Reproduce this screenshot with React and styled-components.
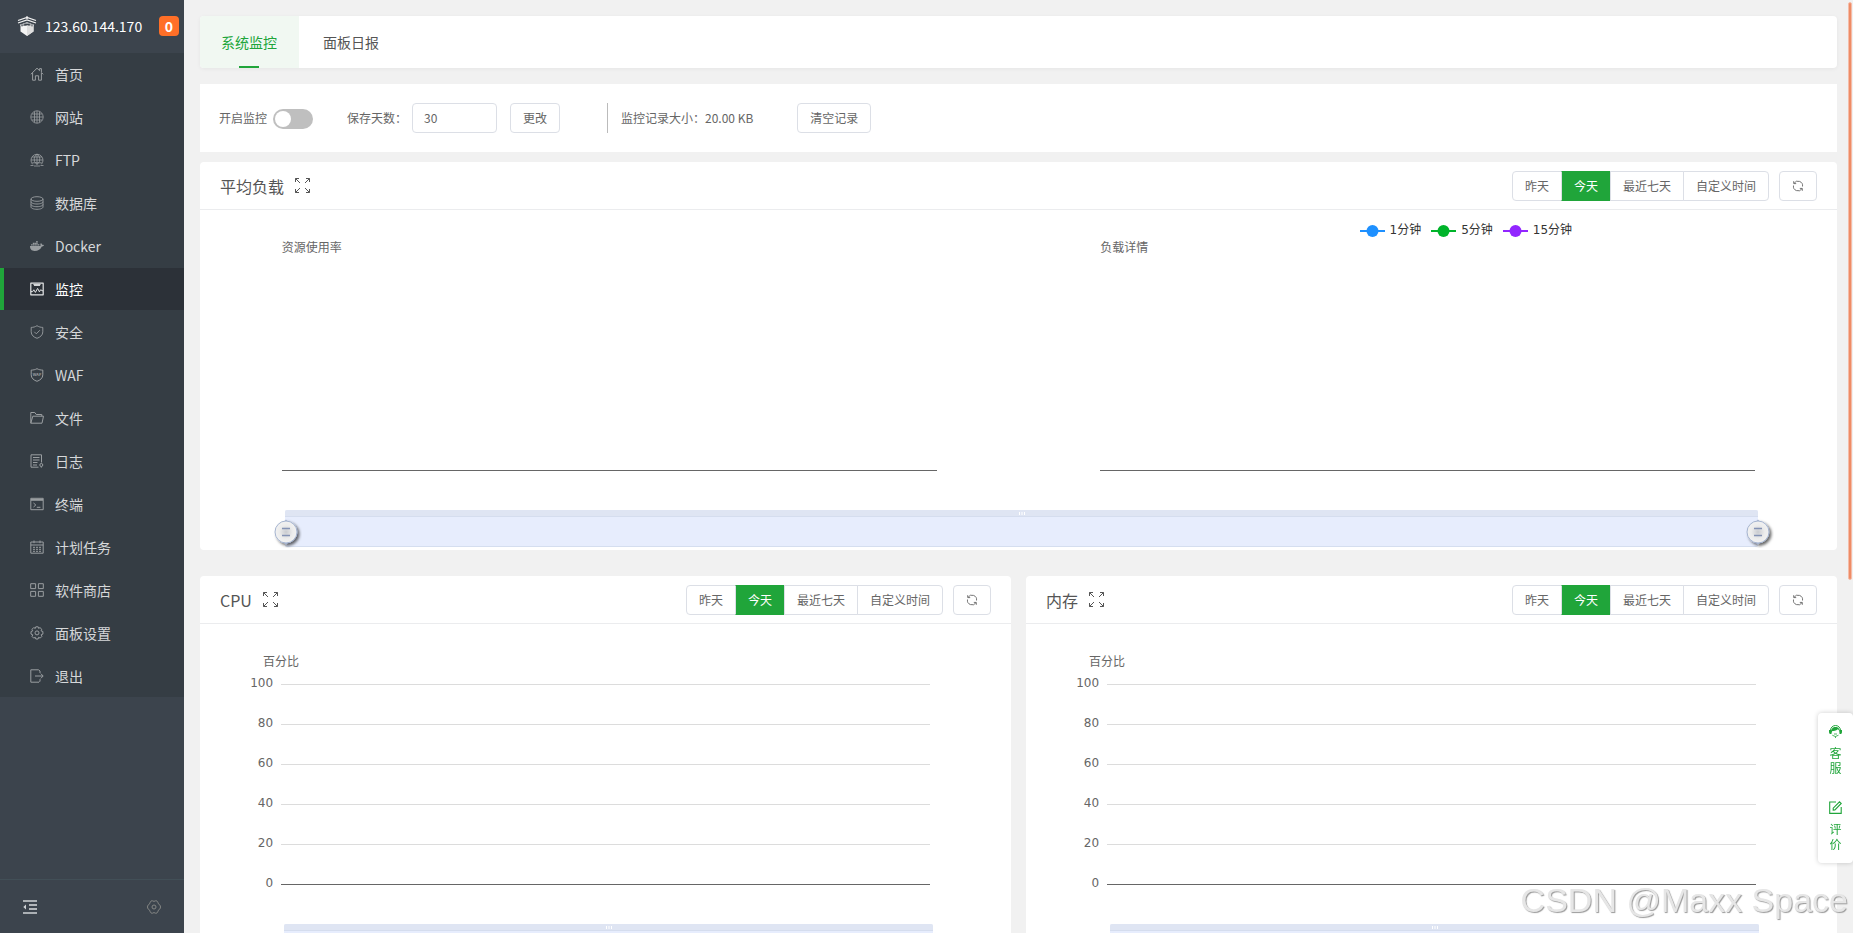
import React, { useState } from 'react'
import styled, { createGlobalStyle, css } from 'styled-components'
import { FaDocker } from 'react-icons/fa'

const colors = {
    green: '#20a53a',
    text: '#666',
    border: '#dcdfe6',
    page: '#f1f1f1',
    sidebar: '#3c444d',
    menu: '#353d44',
    menuActive: '#2c3138'
}

const uiFont = '"Noto Sans CJK SC", "Noto Sans", sans-serif'
const chartFont = '"DejaVu Sans", "Noto Sans CJK SC", sans-serif'

const GlobalStyle = createGlobalStyle`
    * {
        box-sizing: border-box;
    }

    body {
        margin: 0;
        background: ${colors.page};
        color: ${colors.text};
        font-family: ${uiFont};
        font-size: 12px;
    }

    button, input {
        font-family: inherit;
        font-size: inherit;
        color: inherit;
    }
`

const Layout = styled.div`
    display: flex;
    height: 100vh;
    overflow: hidden;
`

/* sidebar */

const Sidebar = styled.aside`
    display: flex;
    flex-direction: column;
    flex: none;
    width: 184px;
    background: ${colors.sidebar};
`

const SidebarHeader = styled.header`
    display: flex;
    align-items: center;
    height: 53px;
    padding: 0 5px 1px 17px;
    color: #fff;
    font-size: 14px;
    line-height: 20px;
`

const ServerAddress = styled.span`
    flex: 1;
    margin-left: 8px;
`

const MessageCount = styled.span`
    width: 20px;
    height: 20px;
    border-radius: 4px;
    background: #ff6f27;
    font-weight: 700;
    text-align: center;
`

const Menu = styled.nav`
    display: flex;
    flex-direction: column;
    gap: 1px;
    background: ${colors.menu};
`

const MenuLink = styled.a`
    display: flex;
    align-items: center;
    gap: 11px;
    height: 42px;
    padding: 0 0 0 26px;
    border-left: 4px solid ${({ $active }) => ($active ? colors.green : 'transparent')};
    background: ${({ $active }) => ($active ? colors.menuActive : 'transparent')};
    color: ${({ $active }) => ($active ? '#fff' : '#d6d8da')};
    font-size: 14px;
    line-height: 20px;
    text-decoration: none;

    svg {
        flex: none;
        color: ${({ $active }) => ($active ? '#e4e5e6' : '#9a9ea1')};
    }
`

const SidebarFooter = styled.footer`
    display: flex;
    align-items: center;
    justify-content: space-between;
    height: 54px;
    margin-top: auto;
    padding: 0 23px;
    border-top: 1px solid #424f57;
`

const IconButton = styled.button`
    display: flex;
    padding: 0;
    border: 0;
    background: none;
    color: ${({ $dim }) => ($dim ? '#858785' : '#d0d3d6')};
`

/* content */

const Content = styled.main`
    flex: 1;
    min-width: 0;
    padding: 16px 16px 0;
`

const TabBar = styled.div`
    display: flex;
    gap: 3px;
    height: 52px;
    border-radius: 4px;
    overflow: hidden;
    background: #fff;
    box-shadow: 0 1px 4px rgba(0, 0, 0, 0.05);
`

const Tab = styled.button`
    display: flex;
    flex-direction: column;
    align-items: center;
    padding: 16px 22px 0 21px;
    border: 0;
    background: ${({ $active }) => ($active ? '#f1f8f2' : '#fff')};
    color: ${({ $active }) => ($active ? colors.green : '#555')};
    font-size: 14px;
    line-height: 20px;

    &::after {
        content: '';
        width: 20px;
        height: 2px;
        margin-top: auto;
        background: ${({ $active }) => ($active ? colors.green : 'transparent')};
    }
`

const SettingsBar = styled.section`
    display: flex;
    align-items: center;
    height: 68px;
    margin: 16px 0 10px;
    padding: 0 19px;
    background: #fff;
    line-height: 18px;
`

const SwitchLabel = styled.label`
    display: flex;
    align-items: center;
    gap: 6px;
    margin-right: 34px;
`

const Switch = styled.input`
    appearance: none;
    width: 40px;
    height: 20px;
    margin: 2px 0 0;
    padding: 2px;
    border-radius: 10px;
    background: ${({ checked }) => (checked ? colors.green : '#bfbfbf')};

    &::before {
        content: '';
        display: block;
        width: 16px;
        height: 16px;
        margin-left: ${({ checked }) => (checked ? '20px' : '0')};
        border-radius: 50%;
        background: #fff;
    }
`

const DaysLabel = styled.label`
    display: flex;
    align-items: center;
    gap: 5px;
    margin-right: 13px;
`

const DaysInput = styled.input`
    width: 85px;
    height: 30px;
    padding: 0 10px 1px 11px;
    border: 1px solid ${colors.border};
    border-radius: 4px;
    background: #fff;
`

const Button = styled.button`
    display: flex;
    align-items: center;
    justify-content: center;
    height: 30px;
    padding: 0 12px;
    border: 1px solid ${colors.border};
    border-radius: 4px;
    background: #fff;
    line-height: 18px;
`

const RecordSize = styled.div`
    display: flex;
    align-items: center;
    height: 30px;
    margin-left: 47px;
    margin-right: 44px;
    padding-left: 13px;
    border-left: 1px solid #bbb;
`

const Card = styled.section`
    border-radius: 4px;
    background: #fff;
`

const CardHeader = styled.header`
    display: flex;
    align-items: center;
    justify-content: space-between;
    height: 48px;
    padding: 0 20px;
    border-bottom: 1px solid #ebecee;
`

const CardTitle = styled.h2`
    display: flex;
    align-items: center;
    gap: 11px;
    margin: 0;
    color: #555;
    font-size: 16px;
    font-weight: 400;
    line-height: 24px;
`

const Toolbar = styled.div`
    display: flex;
    gap: 10px;
`

const ButtonGroup = styled.div`
    display: flex;
`

const RangeButton = styled(Button)`
    border-radius: 0;

    &:first-child {
        border-radius: 4px 0 0 4px;
    }

    &:last-child {
        border-radius: 0 4px 4px 0;
    }

    & + & {
        margin-left: -1px;
    }

    ${({ $active }) => $active && css`
        border-color: ${colors.green};
        border-left-color: ${colors.border};
        background: ${colors.green};
        background-clip: padding-box;
        color: #fff;
    `}
`

const CardGrid = styled.div`
    display: grid;
    grid-template-columns: 1fr 1fr;
    gap: 15px;
    margin-top: 26px;
`

/* charts */

const ChartBody = styled.div`
    padding: ${({ $top }) => $top}px 0 3px;
    font-family: ${chartFont};
    line-height: 16px;
`

const Legend = styled.ul`
    display: flex;
    justify-content: flex-end;
    gap: 10px;
    height: 18px;
    margin: 0 3px 1px 0;
    padding: 0 16% 0 0;
    list-style: none;
    color: #333;
`

const LegendItem = styled.li`
    display: flex;
    align-items: center;
    gap: 5px;
`

const PlotPair = styled.div`
    display: grid;
    grid-template-columns: 1fr 1fr;
`

const Plot = styled.div`
    padding: 0 10%;
`

const PlotArea = styled.div`
    height: 215px;
    border-bottom: 1px solid #666;
`

const AxisName = styled.div`
    margin-left: calc(10% - 18px);
    margin-bottom: 6px;
`

const AxisRows = styled.div`
    display: flex;
    flex-direction: column;
    gap: 23px;
`

const AxisRow = styled.div`
    display: flex;
    align-items: center;
    gap: 8px;
    height: 17px;
    padding-right: 10%;

    &::after {
        content: '';
        flex: 1;
        height: 1px;
        background: ${({ $base }) => ($base ? '#666' : '#dcdcdc')};
    }
`

const AxisLabel = styled.span`
    width: calc(100% / 9 - 8px);
    padding-bottom: 4px;
    text-align: right;
`

const ZoomRow = styled.div`
    margin-top: ${({ $top }) => $top}px;
    padding: 0 calc(${({ $inset }) => $inset} - 3px) 0 calc(${({ $inset }) => $inset} + 3px);
`

const ZoomTrack = styled.div`
    position: relative;
    height: 37px;
    border-bottom: 1px solid #d5deef;
    border-radius: 2px;
    background: #e7edfd;
`

const ZoomGrip = styled.div`
    display: flex;
    justify-content: center;
    align-items: center;
    height: 7px;
    border-bottom: 1px solid #d5ddee;
    border-radius: 2px 2px 0 0;
    background: #dfe5f3;
`

const ZoomHandle = styled.svg`
    position: absolute;
    top: 6px;
    ${({ $side }) => $side}: ${({ $side }) => ($side === 'left' ? '-15px' : '-16px')};
`

/* floating parts */

const HelpPanel = styled.aside`
    position: fixed;
    right: 0;
    bottom: 70px;
    display: flex;
    flex-direction: column;
    gap: 26px;
    width: 35px;
    padding: 12px 11px;
    border-radius: 4px;
    background: #fff;
    box-shadow: 0 0 5px rgba(0, 0, 0, 0.2);
`

const HelpLink = styled.a`
    display: flex;
    flex-direction: column;
    align-items: center;
    gap: 7px;
    width: 13px;
    color: ${colors.green};
    line-height: 15px;
    text-align: center;
    text-decoration: none;
`

const ScrollThumb = styled.div`
    position: fixed;
    top: 2px;
    right: 1px;
    width: 4px;
    height: 62vh;
    border: 1px solid #f5bca8;
    border-radius: 2px;
    background: #ee8c66;
`

const Watermark = styled.div`
    position: fixed;
    right: 5px;
    bottom: 13px;
    color: #e6e6e6;
    font-family: "Liberation Sans", sans-serif;
    font-size: 34px;
    line-height: 40px;
    text-shadow: 1px 1px 1px #999;
    pointer-events: none;
`

/* 14px line icons */
const Icon = ({ stroke = 1, children }) => (
    <svg
        width="14"
        height="14"
        viewBox="0 0 14 14"
        fill="none"
        stroke="currentColor"
        strokeWidth={stroke}
        strokeLinejoin="round"
        aria-hidden="true">
        {children}
    </svg>
)

const menuIcons = {
    home: (
        <Icon>
            <path d="M.8 7.3 7 1.2l2.6 2.5V1.6h1.8v3.9l1.8 1.8M2.6 6v7.2h2.8V8.8h3.2v4.4h2.8V6" />
        </Icon>
    ),
    globe: (
        <Icon stroke={0.8}>
            <circle cx="7" cy="7" r="6.2" />
            <path d="M4.5 1.5v11M9.5 1.5v11M7 .8v12.4M.8 7h12.4M1.8 4h10.4M1.8 10h10.4" />
        </Icon>
    ),
    ftp: (
        <Icon stroke={0.8}>
            <path d="M2.6 11.3a6 6 0 1 1 8.8 0M.5 12.5h3M10.500 12.500h3M4 13h6" />
            <path d="M7 1v10.500Q3.500 9 4.200 5 5 2.500 7 1q2 1.500 2.800 4 .7 4-2.800 6.500M1 7h12M2 4h10M2.200 9.800h9.600" />
        </Icon>
    ),
    database: (
        <Icon stroke={0.9}>
            <ellipse cx="7" cy="3" rx="6" ry="2.3" />
            <path d="M1 3v8c0 1.3 2.7 2.3 6 2.3s6-1 6-2.3V3M1 5.7C1 7 3.7 8 7 8s6-1 6-2.3M1 8.4c0 1.3 2.7 2.3 6 2.3s6-1 6-2.3" />
        </Icon>
    ),
    docker: <FaDocker size={14} />,
    monitor: (
        <Icon>
            <path d="M.8 1.2h12.4v11.6H.8z" strokeWidth="1.2" />
            <path d="M1 9.6h1.6l1.2-1.8 1.6 2.6 2.2-4 1.8 3.4 1.2-2L13 9" />
            <path d="M3.4 2.6h7.2M4 3.4h6" />
        </Icon>
    ),
    shield: (
        <Icon stroke={0.9}>
            <path d="M7 .7c1.8 1.2 3.8 1.7 5.8 1.7v4.4c0 3.4-2.6 5.4-5.8 6.5-3.2-1.1-5.8-3.1-5.8-6.5V2.4C3.2 2.4 5.2 1.9 7 .7z" />
            <path d="m4.3 6.8 2 2 3.6-3.6" />
        </Icon>
    ),
    waf: (
        <Icon>
            <path d="M7 .7c1.8 1 3.8 1.4 5.8 1.4v4.7c0 3.4-2.6 5.4-5.8 6.5-3.2-1.1-5.8-3.1-5.8-6.5V2.1C3.2 2.1 5.2 1.7 7 .7z" />
            <text x="7" y="8" fontSize="4" fontWeight="700" textAnchor="middle" fill="currentColor" stroke="none">WAF</text>
        </Icon>
    ),
    folder: (
        <Icon>
            <path d="M.8 12.2V1.5h4l1.4 2h5.6v1.7M.8 12.2l2-7h10.7l-1.5 7z" />
        </Icon>
    ),
    log: (
        <Icon>
            <path d="M8.5 13.2H1V.8h10.5v7.7M3 3.5h6.500M3 6h6.500M3 8.500h4.500M3 11h4" />
            <circle cx="11.3" cy="11" r="1.5" />
            <path d="M11.3 12.5v1.2" />
        </Icon>
    ),
    terminal: (
        <Icon>
            <path d="M.8 1.3h12.4v11.4H.8z" />
            <path d="M1 2.8h12" strokeWidth="2" />
            <path d="m3.5 6 2.3 2-2.3 2M6.8 10.3h3.6" />
        </Icon>
    ),
    calendar: (
        <Icon>
            <path d="M.8 2h12.4v11.2H.8zM.8 5h12.4M4 .5v2.7M10 .5v2.7" />
            <path d="M3 7.3h8M3 9.3h8M3 11.3h8" strokeDasharray="2 1" />
        </Icon>
    ),
    store: (
        <Icon>
            <path d="M.7.7h4.900v4.900H.7zM8.400.7h4.900v4.900H8.400zM.7 8.400h4.900v4.900H.7zM8.400 8.400h4.900v4.900H8.400z" />
        </Icon>
    ),
    settings: (
        <Icon>
            <path d="M5.8.8h2.4l.4 1.6 1.4-.8 1.8 1.7-.8 1.5 1.9.7v2.6l-1.8.7.8 1.600-1.700 1.700-1.600-.8-.5 1.700H5.800l-.5-1.700-1.600.8L2 10.400l.8-1.600L1 8.100V5.500l1.800-.7L2 3.300l1.700-1.700 1.600.8z" />
            <circle cx="7" cy="6.9" r="2" />
        </Icon>
    ),
    exit: (
        <Icon>
            <path d="M10 4V2L8.5.8H.8v12.4H9l1-1v-2M5 7h8M10.8 4.600 13.200 7l-2.400 2.400" />
        </Icon>
    )
}

const Logo = () => (
    <svg width="20" height="20" viewBox="0 0 20 20" aria-hidden="true">
        <path d="M3.500 9.500h13v6L10 20l-6.500-4.500z" fill="#f4f4f4" />
        <path d="M10 9.500h6.500v6L10 20z" fill="#dedede" />
        <path d="M1 4.500 10 1.500l9 3M1 7l9-3 9 3M3 9.200 10 6.800l7 2.400M10 0v3" fill="none" stroke="#f2f2f2" strokeWidth="1.200" />
        <path d="M5 7.500v3M8 7v3M12 7v3M15 7.500v3" stroke="#3c444d" strokeWidth=".8" />
    </svg>
)

const ExpandIcon = () => (
    <svg width="15" height="15" viewBox="0 0 15 15" fill="none" stroke="currentColor" aria-hidden="true">
        <path d="M.5 4V.5H4M.5.5 5 5M11 .5h3.5V4M14.5.5 10 5M.5 11v3.5H4M.5 14.5 5 10M14.5 11v3.5H11M14.5 14.5 10 10" />
    </svg>
)

const RefreshIcon = () => (
    <svg width="12" height="12" viewBox="0 0 12 12" fill="none" stroke="currentColor" strokeWidth=".9" aria-hidden="true">
        <path d="M2 3.400a4.600 4.600 0 0 1 8.500 3.100M10 8.600a4.600 4.600 0 0 1-8.500-3.100" />
        <path d="M1.700 1.200v2.400h2.500M10.300 10.800V8.400H7.800" />
    </svg>
)

const CollapseIcon = () => (
    <Icon>
        <path d="M0 1h14M0 13h14" strokeWidth="1.3" />
        <path d="M6 5h8M6 9h8" strokeWidth="1.8" opacity=".8" />
        <path d="M3 4.5v5L.3 7z" fill="currentColor" stroke="none" />
    </Icon>
)

const CogIcon = () => (
    <Icon>
        <path d="M4.300.8h1.200Q7 2 8.500.8h1.200l1.400 2q0 1.300 1.100 1.500l1.200 1.700v2l-1.200 1.700q-1.100.2-1.100 1.500l-1.400 2H8.500Q7 12 5.500 13.200H4.300l-1.400-2q0-1.300-1.100-1.500L.6 8V6l1.200-1.700q1.100-.2 1.100-1.500z" />
        <circle cx="7" cy="7" r="2" />
    </Icon>
)

const ServiceIcon = () => (
    <svg width="13" height="13" viewBox="0 0 13 13" aria-hidden="true">
        <path d="M1.5 5.5a5 5 0 0 1 10 0" fill="none" stroke="currentColor" />
        <path d="M2 8.3C1.6 3.5 4 1.9 6.5 1.9S11.4 3.500 11 8.300C10.600 5.800 9.700 4.800 8.800 4.300 7 6 4.600 6 3.400 6z" fill="currentColor" />
        <path d="M0 5h2.5v4H1Q0 8.5 0 7zM13 5h-2.5v4H12q1-.5 1-2z" fill="currentColor" />
        <path d="M3.3 10.200q3 2.700 6.200 0M6.500 11.500v1.500M5 9h3" fill="none" stroke="currentColor" strokeWidth=".8" />
    </svg>
)

const EditIcon = () => (
    <svg width="13" height="13" viewBox="0 0 13 13" fill="none" stroke="currentColor" strokeWidth="1.1" aria-hidden="true">
        <path d="M7 1H.7v11.4h11.500V6" />
        <path d="M4.2 9.2V7.2L10.5.8l1.7 1.6-6.3 6.5z" />
    </svg>
)

const ranges = ['昨天', '今天', '最近七天', '自定义时间']

const menu = [
    ['home', '首页'],
    ['globe', '网站'],
    ['ftp', 'FTP'],
    ['database', '数据库'],
    ['docker', 'Docker'],
    ['monitor', '监控'],
    ['shield', '安全'],
    ['waf', 'WAF'],
    ['folder', '文件'],
    ['log', '日志'],
    ['terminal', '终端'],
    ['calendar', '计划任务'],
    ['store', '软件商店'],
    ['settings', '面板设置'],
    ['exit', '退出']
]

const series = [
    { name: '1分钟', color: '#1e90ff' },
    { name: '5分钟', color: '#00b42a' },
    { name: '15分钟', color: '#9226ff' }
]

const ChartCard = ({ title, children }) => {
    const [range, setRange] = useState('今天')

    return (
        <Card>
            <CardHeader>
                <CardTitle>
                    {title}
                    <ExpandIcon />
                </CardTitle>
                <Toolbar>
                    <ButtonGroup>
                        {ranges.map((name) => (
                            <RangeButton
                                key={name}
                                type="button"
                                $active={name === range}
                                onClick={() => setRange(name)}>
                                {name}
                            </RangeButton>
                        ))}
                    </ButtonGroup>
                    <Button type="button" aria-label="刷新"><RefreshIcon /></Button>
                </Toolbar>
            </CardHeader>
            {children}
        </Card>
    )
}

const Handle = ({ side }) => (
    <ZoomHandle $side={side} width="32" height="32" viewBox="0 0 32 32" aria-hidden="true">
        <defs>
            <filter id={`shadow-${side}`} x="-30%" y="-30%" width="160%" height="160%">
                <feDropShadow dx="2" dy="2" stdDeviation="1.5" floodColor="#000" floodOpacity=".6" />
            </filter>
            <radialGradient id={`face-${side}`}>
                <stop offset="0" stopColor="#c9cbd0" />
                <stop offset=".6" stopColor="#ececec" />
                <stop offset="1" stopColor="#f2f2f2" />
            </radialGradient>
        </defs>
        <g filter={`url(#shadow-${side})`}>
            <circle cx="16" cy="16" r="11" fill={`url(#face-${side})`} stroke="#a5b4d0" />
            <path d="m14.500 5 1.500-1.500L17.500 5zM14.500 27l1.500 1.500 1.500-1.500z" fill="#a5b4d0" />
        </g>
        <path d="M12 12.5h8M12 19.5h8" stroke="#8593b5" strokeWidth="1.3" />
    </ZoomHandle>
)

const DataZoom = ({ top, inset }) => (
    <ZoomRow $top={top} $inset={inset}>
        <ZoomTrack>
            <ZoomGrip>
                <svg width="6" height="3" viewBox="0 0 6 3" stroke="#fff" aria-hidden="true">
                    <path d="M.5 0v3M3 0v3M5.5 0v3" />
                </svg>
            </ZoomGrip>
            <Handle side="left" />
            <Handle side="right" />
        </ZoomTrack>
    </ZoomRow>
)

const LoadChart = () => (
    <ChartBody $top={11}>
        <Legend>
            {series.map(({ name, color }) => (
                <LegendItem key={name}>
                    <svg width="25" height="14" viewBox="0 0 25 14" aria-hidden="true">
                        <path d="M0 8h25" stroke={color} strokeWidth="2" />
                        <circle cx="12.5" cy="8" r="6" fill={color} />
                    </svg>
                    {name}
                </LegendItem>
            ))}
        </Legend>
        <PlotPair>
            <Plot>
                资源使用率
                <PlotArea />
            </Plot>
            <Plot>
                负载详情
                <PlotArea />
            </Plot>
        </PlotPair>
        <DataZoom top={39} inset="5%" />
    </ChartBody>
)

const PercentChart = () => (
    <ChartBody $top={30}>
        <AxisName>百分比</AxisName>
        <AxisRows>
            {[100, 80, 60, 40, 20, 0].map((value) => (
                <AxisRow key={value} $base={value === 0}>
                    <AxisLabel>{value}</AxisLabel>
                </AxisRow>
            ))}
        </AxisRows>
        <DataZoom top={31} inset="10%" />
    </ChartBody>
)

const App = () => {
    const [enabled, setEnabled] = useState(false)
    const [days, setDays] = useState('30')
    const [tab, setTab] = useState('系统监控')

    return (
        <>
            <GlobalStyle />
            <Layout>
                <Sidebar>
                    <SidebarHeader>
                        <Logo />
                        <ServerAddress>123.60.144.170</ServerAddress>
                        <MessageCount>0</MessageCount>
                    </SidebarHeader>
                    <Menu>
                        {menu.map(([icon, name]) => (
                            <MenuLink key={icon} href={`#${icon}`} $active={icon === 'monitor'}>
                                {menuIcons[icon]}
                                {name}
                            </MenuLink>
                        ))}
                    </Menu>
                    <SidebarFooter>
                        <IconButton type="button" aria-label="收起菜单"><CollapseIcon /></IconButton>
                        <IconButton type="button" aria-label="菜单设置" $dim><CogIcon /></IconButton>
                    </SidebarFooter>
                </Sidebar>

                <Content>
                    <TabBar>
                        {['系统监控', '面板日报'].map((name) => (
                            <Tab key={name} type="button" $active={name === tab} onClick={() => setTab(name)}>
                                {name}
                            </Tab>
                        ))}
                    </TabBar>

                    <SettingsBar>
                        <SwitchLabel htmlFor="monitor-enabled">
                            开启监控
                            <Switch
                                id="monitor-enabled"
                                type="checkbox"
                                checked={enabled}
                                onChange={(e) => setEnabled(e.target.checked)} />
                        </SwitchLabel>
                        <DaysLabel htmlFor="keep-days">
                            保存天数：
                            <DaysInput
                                id="keep-days"
                                type="text"
                                value={days}
                                onChange={(e) => setDays(e.target.value)} />
                        </DaysLabel>
                        <Button type="button">更改</Button>
                        <RecordSize>监控记录大小：20.00 KB</RecordSize>
                        <Button type="button">清空记录</Button>
                    </SettingsBar>

                    <ChartCard title="平均负载">
                        <LoadChart />
                    </ChartCard>

                    <CardGrid>
                        <ChartCard title="CPU">
                            <PercentChart />
                        </ChartCard>
                        <ChartCard title="内存">
                            <PercentChart />
                        </ChartCard>
                    </CardGrid>
                </Content>
            </Layout>

            <HelpPanel>
                <HelpLink href="#service">
                    <ServiceIcon />
                    客服
                </HelpLink>
                <HelpLink href="#feedback">
                    <EditIcon />
                    评价
                </HelpLink>
            </HelpPanel>
            <ScrollThumb />
            <Watermark>CSDN @Maxx Space</Watermark>
        </>
    )
}

export default App
